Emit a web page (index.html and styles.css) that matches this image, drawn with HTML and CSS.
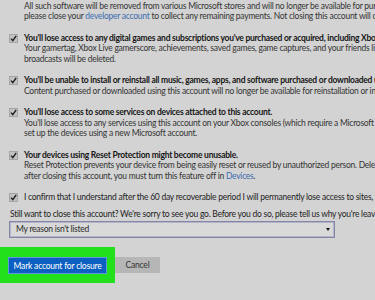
FILE: index.html
```html
<!DOCTYPE html>
<html lang="en">
<head>
    <meta charset="UTF-8">
    <meta name="viewport" content="width=device-width, initial-scale=1.0">
    <title>Close your account</title>
    <link rel="stylesheet" href="styles.css">
</head>
<body>
    <div class="page">
        <div class="item">
            <span class="check"><svg viewBox="0 0 9 9" width="9" height="9"><rect x="0.5" y="0.5" width="8" height="8" fill="#c2c2c2" stroke="#a5a5a5"/><path d="M2 4.6 L3.8 6.6 L7.2 1.8" fill="none" stroke="#1c1c1c" stroke-width="1.4"/></svg></span>
            <div class="text">
                <div class="title">Your apps will be removed from the Store</div>
                <div class="desc">All such software will be removed from various Microsoft stores and will no longer be available for purch</div>
                <div class="desc">please close your <a href="#">developer account</a> to collect any remaining payments. Not closing this account will cau</div>
            </div>
        </div>

        <div class="item">
            <span class="check"><svg viewBox="0 0 9 9" width="9" height="9"><rect x="0.5" y="0.5" width="8" height="8" fill="#c2c2c2" stroke="#a5a5a5"/><path d="M2 4.6 L3.8 6.6 L7.2 1.8" fill="none" stroke="#1c1c1c" stroke-width="1.4"/></svg></span>
            <div class="text">
                <div class="title">You'll lose access to any digital games and subscriptions you've purchased or acquired, including Xbo</div>
                <div class="desc">Your gamertag, Xbox Live gamerscore, achievements, saved games, game captures, and your friends list w</div>
                <div class="desc">broadcasts will be deleted.</div>
            </div>
        </div>

        <div class="item">
            <span class="check"><svg viewBox="0 0 9 9" width="9" height="9"><rect x="0.5" y="0.5" width="8" height="8" fill="#c2c2c2" stroke="#a5a5a5"/><path d="M2 4.6 L3.8 6.6 L7.2 1.8" fill="none" stroke="#1c1c1c" stroke-width="1.4"/></svg></span>
            <div class="text">
                <div class="title">You'll be unable to install or reinstall all music, games, apps, and software purchased or downloaded u</div>
                <div class="desc">Content purchased or downloaded using this account will no longer be available for reinstallation or inst</div>
            </div>
        </div>

        <div class="item">
            <span class="check"><svg viewBox="0 0 9 9" width="9" height="9"><rect x="0.5" y="0.5" width="8" height="8" fill="#c2c2c2" stroke="#a5a5a5"/><path d="M2 4.6 L3.8 6.6 L7.2 1.8" fill="none" stroke="#1c1c1c" stroke-width="1.4"/></svg></span>
            <div class="text">
                <div class="title">You'll lose access to some services on devices attached to this account.</div>
                <div class="desc">You'll lose access to any services using this account on your Xbox consoles (which require a Microsoft acc</div>
                <div class="desc">set up the devices using a new Microsoft account.</div>
            </div>
        </div>

        <div class="item">
            <span class="check"><svg viewBox="0 0 9 9" width="9" height="9"><rect x="0.5" y="0.5" width="8" height="8" fill="#c2c2c2" stroke="#a5a5a5"/><path d="M2 4.6 L3.8 6.6 L7.2 1.8" fill="none" stroke="#1c1c1c" stroke-width="1.4"/></svg></span>
            <div class="text">
                <div class="title">Your devices using Reset Protection might become unusable.</div>
                <div class="desc">Reset Protection prevents your device from being easily reset or reused by unauthorized person. Deleting</div>
                <div class="desc">after closing this account, you must turn this feature off in <a href="#">Devices</a>.</div>
            </div>
        </div>

        <div class="item last">
            <span class="check"><svg viewBox="0 0 9 9" width="9" height="9"><rect x="0.5" y="0.5" width="8" height="8" fill="#c2c2c2" stroke="#a5a5a5"/><path d="M2 4.6 L3.8 6.6 L7.2 1.8" fill="none" stroke="#1c1c1c" stroke-width="1.4"/></svg></span>
            <div class="text">
                <div class="confirm">I confirm that I understand after the 60 day recoverable period I will permanently lose access to sites,</div>
            </div>
        </div>

        <div class="reason-label">Still want to close this account? We're sorry to see you go. Before you do so, please tell us why you're leav</div>
        <div class="select">
            <span>My reason isn't listed</span>
            <span class="arrow"></span>
        </div>

        <div class="actions">
            <div class="highlight">
                <button class="btn primary">Mark account for closure</button>
            </div>
            <button class="btn cancel">Cancel</button>
        </div>
    </div>
</body>
</html>
```

FILE: styles.css
```css
body {
    margin: 0;
    width: 375px;
    height: 300px;
    overflow: hidden;
    background-color: #d3d3d3;
    font-family: Lato, "Open Sans", sans-serif;
    font-size: 8.5px;
    line-height: 10.5px;
    letter-spacing: -0.25px;
    color: #2a2a2a;
}
.page {
    margin-top: -10px;
    padding-left: 9px;
    white-space: nowrap;
}
.item {
    display: flex;
    align-items: flex-start;
    gap: 6px;
    margin-bottom: 11px;
}
.item.last {
    margin-bottom: 6px;
}
.check {
    display: flex;
    margin-top: 1px;
}
.title {
    font-weight: bold;
    color: #161616;
}
.desc {
    color: #333;
}
.desc a {
    color: #3a6cb0;
    text-decoration: none;
}
.confirm {
    color: #1e1e1e;
}
.reason-label {
    color: #1e1e1e;
    padding-left: 1px;
}
.select {
    box-sizing: border-box;
    width: 326px;
    height: 17px;
    margin-top: 2px;
    display: flex;
    align-items: center;
    justify-content: space-between;
    padding: 0 4px 0 6px;
    border: 1px solid #8585a8;
    box-shadow: inset 0 0 0 1px #b4b4c8;
    background-color: #d9d9d9;
    color: #2a2a2a;
}
.arrow {
    width: 0;
    height: 0;
    border-left: 2px solid transparent;
    border-right: 2px solid transparent;
    border-top: 3px solid #111;
}
.actions {
    display: flex;
    align-items: center;
    margin-top: 9px;
    margin-left: -9px;
}
.highlight {
    padding: 10px 8px 9px 8px;
    background-color: #22e01c;
}
.btn {
    font-family: inherit;
    font-size: 8.5px;
    letter-spacing: -0.2px;
    height: 17px;
    border: none;
    padding: 0;
    margin: 0;
}
.primary {
    width: 99px;
    background-color: #0b60c2;
    color: #fff;
    border: 1px solid #5d97dc;
}
.cancel {
    width: 45px;
    height: 16px;
    background-color: #b6b6b6;
    color: #333;
}
```
